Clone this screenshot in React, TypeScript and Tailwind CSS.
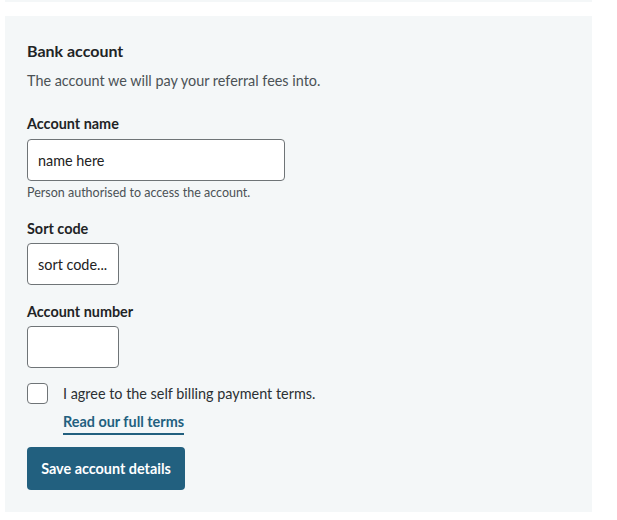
import { useState } from "react";

export default function App() {
  const [agreed, setAgreed] = useState(false);

  return (
    <div className="min-h-[520px] bg-white font-['Lato','Noto_Sans',sans-serif] text-[#222]">
      <div className="ml-[5px] h-[2px] w-[587px] bg-[#f4f7f8]" />
      <section className="mt-[14px] ml-[5px] h-[496px] w-[587px] bg-[#f4f7f8] px-[22px] pt-[24px]">
        <h2 className="text-[16px] font-bold leading-[22px] text-[#1f2426]">Bank account</h2>
        <p className="mt-[9px] text-[14.4px] leading-[20px] text-[#4b5256]">
          The account we will pay your referral fees into.
        </p>

        <label className="mt-[23px] block text-[14.4px] font-bold leading-[20px] text-[#1f2426]">
          Account name
        </label>
        <input
          className="mt-[5px] block h-[42px] w-[258px] rounded-[4px] border border-[#6f7477] bg-white px-[10px] text-[14.4px] text-[#222] outline-none"
          defaultValue="name here"
        />
        <p className="mt-[4px] text-[12.5px] leading-[16px] text-[#4b5256]">
          Person authorised to access the account.
        </p>

        <label className="mt-[18px] block text-[14.4px] font-bold leading-[20px] text-[#1f2426]">
          Sort code
        </label>
        <input
          className="mt-[4px] block h-[42px] w-[92px] rounded-[4px] border border-[#6f7477] bg-white px-[10px] text-[14.4px] text-[#222] outline-none"
          defaultValue="sort code..."
        />

        <label className="mt-[17px] block text-[14.4px] font-bold leading-[20px] text-[#1f2426]">
          Account number
        </label>
        <input className="mt-[4px] block h-[42px] w-[92px] rounded-[4px] border border-[#6f7477] bg-white px-[10px] text-[14.4px] text-[#222] outline-none" />

        <div className="mt-[15px] flex items-start gap-[15px]">
          <button
            type="button"
            onClick={() => setAgreed(!agreed)}
            className="h-[21px] w-[21px] shrink-0 rounded-[4px] border border-[#6f7477] bg-white"
          >
            {agreed && (
              <svg viewBox="0 0 24 24" className="h-full w-full" fill="none" stroke="#22607f" strokeWidth="3">
                <path d="M5 12l5 5 9-10" />
              </svg>
            )}
          </button>
          <div>
            <p className="text-[14.4px] leading-[21px] text-[#2b3033]">I agree to the self billing payment terms.</p>
            <a
              href="#"
              className="mt-[8px] inline-block border-b-2 border-[#22607f] pb-[1px] text-[14.4px] font-bold leading-[20px] text-[#22607f]"
            >
              Read our full terms
            </a>
          </div>
        </div>

        <button
          type="button"
          className="mt-[12px] h-[43px] w-[158px] rounded-[4px] bg-[#22607f] text-[14.4px] font-bold text-white"
        >
          Save account details
        </button>
      </section>
    </div>
  );
}
